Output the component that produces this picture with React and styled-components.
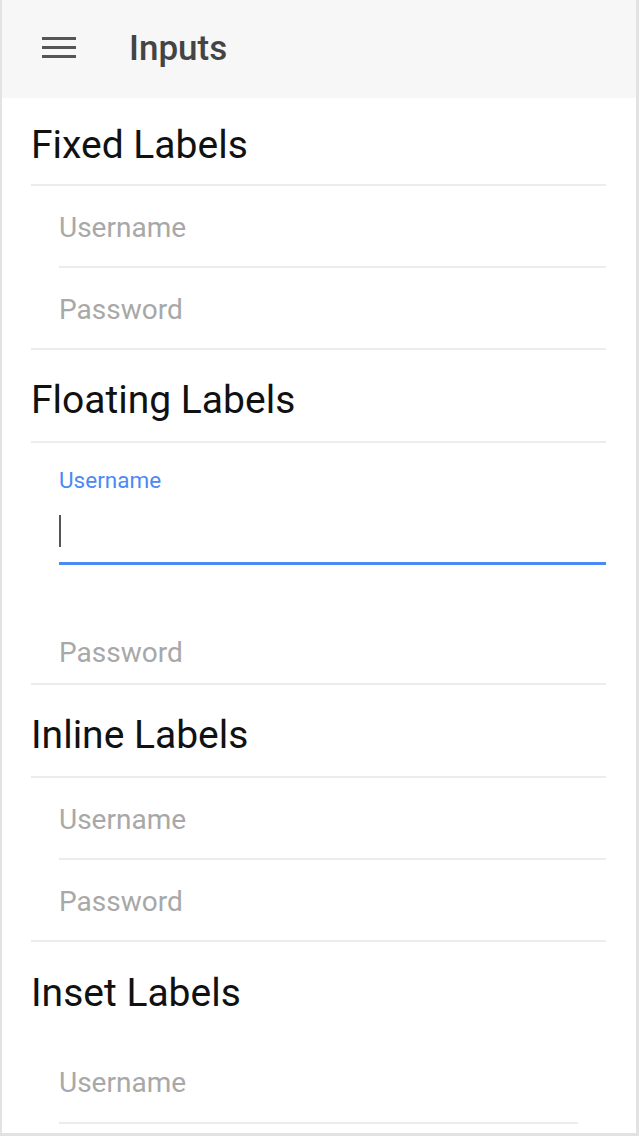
import styled, { createGlobalStyle } from "styled-components";

const GlobalStyle = createGlobalStyle`
  html, body {
    margin: 0;
    padding: 0;
    background: #ffffff;
  }
  * {
    box-sizing: border-box;
  }
`;

const sections = [
  { title: "Fixed Labels", kind: "fixed" },
  { title: "Floating Labels", kind: "floating" },
  { title: "Inline Labels", kind: "inline" },
  { title: "Inset Labels", kind: "inset" },
];

function MenuIcon() {
  return (
    <svg width="34" height="24" viewBox="0 0 34 24">
      <rect x="0" y="1" width="34" height="3" fill="#555" />
      <rect x="0" y="10" width="34" height="3" fill="#555" />
      <rect x="0" y="19" width="34" height="3" fill="#555" />
    </svg>
  );
}

function Section({ title, kind }) {
  if (kind === "floating") {
    return (
      <>
        <ListHeader>{title}</ListHeader>
        <FloatItem>
          <FloatLabel>Username</FloatLabel>
          <FloatInput>
            <Caret />
          </FloatInput>
        </FloatItem>
        <Item $tall $last>
          <Placeholder>Password</Placeholder>
        </Item>
      </>
    );
  }
  if (kind === "inset") {
    return (
      <>
        <ListHeader $plain>{title}</ListHeader>
        <InsetList>
          <Item $inset>
            <Placeholder>Username</Placeholder>
          </Item>
        </InsetList>
      </>
    );
  }
  return (
    <>
      <ListHeader $first={kind === "fixed"}>{title}</ListHeader>
      <Item>
        <Placeholder>Username</Placeholder>
      </Item>
      <Item $last>
        <Placeholder>Password</Placeholder>
      </Item>
    </>
  );
}

export default function App() {
  return (
    <>
      <GlobalStyle />
      <Frame>
        <Toolbar>
          <MenuButton>
            <MenuIcon />
          </MenuButton>
          <Title>Inputs</Title>
        </Toolbar>
        <Content>
          {sections.map((s) => (
            <Section key={s.title} title={s.title} kind={s.kind} />
          ))}
        </Content>
      </Frame>
    </>
  );
}

const Frame = styled.div`
  width: 639px;
  height: 1136px;
  overflow: hidden;
  border-left: 2px solid #e2e2e2;
  border-right: 3px solid #e2e2e2;
  border-bottom: 3px solid #e2e2e2;
  font-family: Roboto, "Noto Sans", sans-serif;
  background: #fff;
`;

const Toolbar = styled.header`
  height: 98px;
  background: #f7f7f7;
  display: flex;
  align-items: center;
  padding-left: 40px;
`;

const MenuButton = styled.div`
  display: flex;
  align-items: center;
  width: 87px;
  margin-top: -2px;
`;

const Title = styled.h1`
  margin: 0;
  font-size: 35px;
  font-weight: 500;
  color: #444;
  margin-top: -1px;
`;

const Content = styled.main`
  padding: 0 30px 0 29px;
`;

const ListHeader = styled.div`
  height: ${(p) => (p.$first ? "88px" : "93px")};
  padding-top: ${(p) => (p.$first ? "8px" : "9px")};
  display: flex;
  align-items: center;
  font-size: 39px;
  color: #111;
  border-bottom: ${(p) => (p.$plain ? "none" : "2px solid #ececec")};
`;

const Item = styled.div`
  height: ${(p) => (p.$tall ? "120px" : "82px")};
  margin-left: ${(p) => (p.$last ? "0" : "28px")};
  padding-left: ${(p) => (p.$last ? "28px" : "0")};
  margin-right: ${(p) => (p.$inset ? "28px" : "0")};
  display: flex;
  align-items: ${(p) => (p.$tall ? "flex-end" : "center")};
  padding-bottom: ${(p) => (p.$tall ? "14px" : "0")};
  padding-top: ${(p) => (p.$tall || p.$inset ? "0" : "2px")};
  border-bottom: 2px solid #ececec;
`;

const Placeholder = styled.span`
  font-size: 28px;
  color: #a8a8a8;
`;

const FloatItem = styled.div`
  margin-left: 28px;
  padding-top: 25px;
  display: flex;
  flex-direction: column;
`;

const FloatLabel = styled.span`
  font-size: 22.5px;
  color: #4a8af4;
  line-height: 24px;
`;

const FloatInput = styled.div`
  height: 73px;
  border-bottom: 3px solid #4a8af4;
  display: flex;
  align-items: flex-start;
  padding-top: 23px;
`;

const Caret = styled.span`
  width: 2px;
  height: 32px;
  background: #555;
`;

const InsetList = styled.div`
  margin-top: 7px;
`;
